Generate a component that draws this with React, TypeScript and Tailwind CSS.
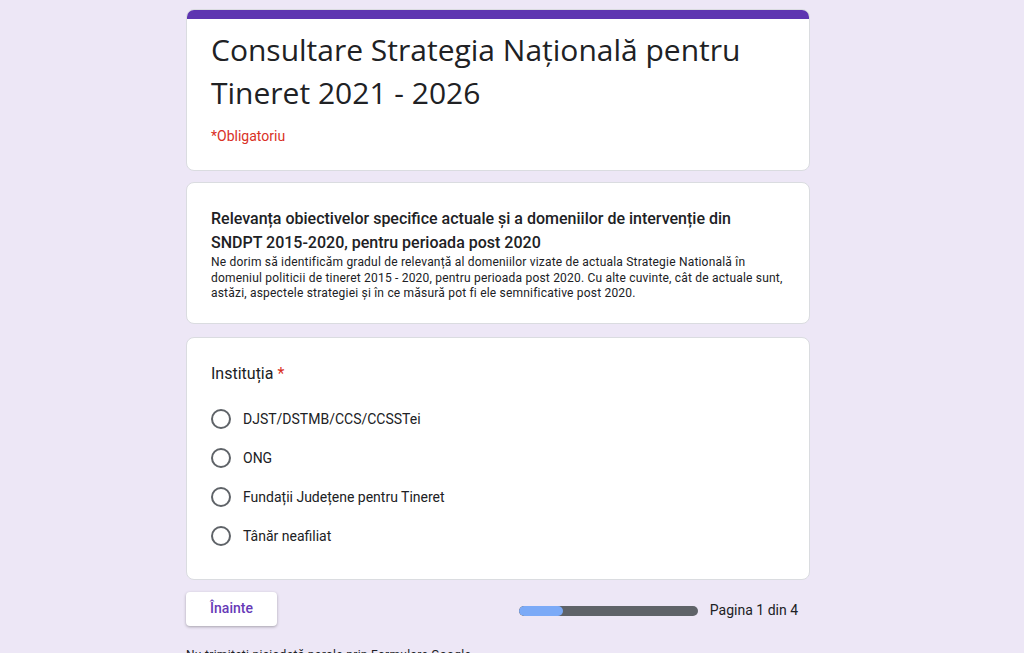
import React from 'react'

const options = [
  'DJST/DSTMB/CCS/CCSSTei',
  'ONG',
  'Fundații Județene pentru Tineret',
  'Tânăr neafiliat',
]

const font = { fontFamily: 'Roboto, "Liberation Sans", sans-serif' }

export default function App() {
  return (
    <div className="min-h-[653px] w-full bg-[#ede7f6] text-[#202124] overflow-hidden" style={font}>
      <div className="ml-[186px] w-[624px] pt-[9px] flex flex-col">
        {/* Titlu */}
        <div className="bg-white rounded-lg border border-[#dadce0] overflow-hidden">
          <div className="h-[9px] bg-[#5e35b1]" />
          <div className="px-6 pt-[9px] pb-[24px]">
            <h1 className="text-[30px] leading-[43px] font-normal text-[#202124]" style={{ fontFamily: '"Open Sans", Roboto, sans-serif' }}>
              Consultare Strategia Națională pentru Tineret 2021 - 2026
            </h1>
            <div className="mt-[12px] text-[14px] leading-[20px] text-[#d93025]">*Obligatoriu</div>
          </div>
        </div>

        {/* Secțiune */}
        <div className="mt-[11px] bg-white rounded-lg border border-[#dadce0] px-6 pt-[24px] pb-[21px]">
          <h2 className="text-[16px] leading-[24px] font-medium text-[#202124]">
            Relevanța obiectivelor specifice actuale și a domeniilor de intervenție din SNDPT 2015-2020, pentru perioada post 2020
          </h2>
          <p className="text-[12px] leading-[15.5px] tracking-[0.2px] text-[#202124]">
            Ne dorim să identificăm gradul de relevanță al domeniilor vizate de actuala Strategie Natională în domeniul politicii de tineret 2015 - 2020, pentru perioada post 2020. Cu alte cuvinte, cât de actuale sunt, astăzi, aspectele strategiei și în ce măsură pot fi ele semnificative post 2020.
          </p>
        </div>

        {/* Întrebare */}
        <div className="mt-[13px] bg-white rounded-lg border border-[#dadce0] px-6 pt-[24px] pb-[23px]">
          <div className="text-[16px] leading-[24px] text-[#202124]">
            Instituția <span className="text-[#d93025]">*</span>
          </div>
          <div className="mt-[14px] flex flex-col">
            {options.map(o => (
              <label key={o} className="h-[39px] flex items-center gap-3">
                <span className="w-5 h-5 rounded-full border-2 border-[#5f6368] shrink-0" />
                <span className="text-[14px] text-[#202124]">{o}</span>
              </label>
            ))}
          </div>
        </div>

        {/* Navigare */}
        <div className="mt-[12px] flex items-center justify-between pr-[12px]">
          <button className="w-[91px] h-[34px] bg-white rounded shadow-[0_1px_3px_rgba(0,0,0,0.3)] text-[14px] font-medium text-[#673ab7]">
            Înainte
          </button>
          <div className="flex items-center gap-3 mt-[4px]">
            <div className="w-[179px] h-[10px] rounded-full bg-[#5f6368] overflow-hidden">
              <div className="h-full w-[44px] bg-[#7baaf7] rounded-full" />
            </div>
            <span className="text-[14px] text-[#202124]">Pagina 1 din 4</span>
          </div>
        </div>

        <div className="mt-[20px] text-[12px] tracking-[0.3px] text-[#202124]">
          Nu trimiteți niciodată parole prin Formulare Google.
        </div>
      </div>
    </div>
  )
}
